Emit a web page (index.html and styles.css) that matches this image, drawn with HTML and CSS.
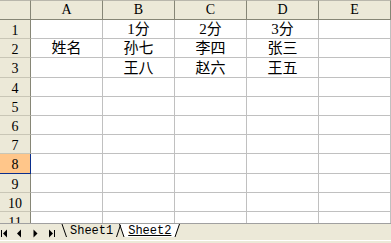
FILE: index.html
```html
<!DOCTYPE html>
<html>
<head>
<meta charset="utf-8">
<link rel="stylesheet" href="styles.css">
</head>
<body>
<div class="app">
  <div class="sheet">
    <div class="grid">
      <div class="corner"></div>
      <div class="ch">A</div><div class="ch">B</div><div class="ch">C</div><div class="ch">D</div><div class="ch">E</div>

      <div class="rh">1</div><div class="c"></div><div class="c">1分</div><div class="c">2分</div><div class="c">3分</div><div class="c"></div>
      <div class="rh">2</div><div class="c">姓名</div><div class="c">孙七</div><div class="c">李四</div><div class="c">张三</div><div class="c"></div>
      <div class="rh">3</div><div class="c"></div><div class="c">王八</div><div class="c">赵六</div><div class="c">王五</div><div class="c"></div>
      <div class="rh">4</div><div class="c"></div><div class="c"></div><div class="c"></div><div class="c"></div><div class="c"></div>
      <div class="rh">5</div><div class="c"></div><div class="c"></div><div class="c"></div><div class="c"></div><div class="c"></div>
      <div class="rh">6</div><div class="c"></div><div class="c"></div><div class="c"></div><div class="c"></div><div class="c"></div>
      <div class="rh">7</div><div class="c"></div><div class="c"></div><div class="c"></div><div class="c"></div><div class="c"></div>
      <div class="rh sel">8</div><div class="c"></div><div class="c"></div><div class="c"></div><div class="c"></div><div class="c"></div>
      <div class="rh">9</div><div class="c"></div><div class="c"></div><div class="c"></div><div class="c"></div><div class="c"></div>
      <div class="rh">10</div><div class="c"></div><div class="c"></div><div class="c"></div><div class="c"></div><div class="c"></div>
      <div class="rh">11</div><div class="c"></div><div class="c"></div><div class="c"></div><div class="c"></div><div class="c"></div>
    </div>
  </div>
  <div class="tabbar">
    <div class="tabrow">
      <div class="nav">
        <svg class="btn" width="15" height="16" viewBox="0 0 15 16"><rect x="1" y="6" width="1" height="7" fill="#000"/><polygon points="3,9.5 7,5.5 7,13.5" fill="#000"/></svg>
        <svg class="btn" width="15" height="16" viewBox="0 0 15 16"><polygon points="2,9.5 6,5.5 6,13.5" fill="#000"/></svg>
        <svg class="btn" width="15" height="16" viewBox="0 0 15 16"><polygon points="7.5,9.5 3.5,5.5 3.5,13.5" fill="#000"/></svg>
        <svg class="btn" width="15" height="16" viewBox="0 0 15 16"><polygon points="8,9.5 4,5.5 4,13.5" fill="#000"/><rect x="9" y="6" width="1" height="7" fill="#000"/></svg>
      </div>
      <div class="tabs">
        <svg class="slant" width="8" height="16" viewBox="0 0 8 16"><line x1="2" y1="0" x2="6.5" y2="13" stroke="#000" stroke-width="1"/></svg>
        <span class="tab">Sheet1</span>
        <svg class="slant" width="11" height="16" viewBox="0 0 11 16"><polygon points="4.5,0 11,0 11,13 9,13" fill="#fff"/><line x1="1.5" y1="13" x2="5.5" y2="1" stroke="#000" stroke-width="1"/><line x1="4.5" y1="0" x2="9" y2="13" stroke="#000" stroke-width="1"/></svg>
        <span class="tab active">Sheet2</span>
        <svg class="slant" width="9" height="16" viewBox="0 0 9 16"><polygon points="0,0 6.5,0 2,13 0,13" fill="#fff"/><line x1="2" y1="13" x2="6.5" y2="0" stroke="#000" stroke-width="1"/></svg>
      </div>
    </div>
    <div class="strip"></div>
  </div>
</div>
</body>
</html>
```

FILE: styles.css
```css
* { box-sizing: border-box; margin: 0; padding: 0; }
html, body { background: #fff; }
body {
  width: 391px;
  height: 243px;
  overflow: hidden;
  font-family: "Liberation Serif", "Noto Sans CJK SC", serif;
  color: #000;
}
.sheet { height: 223px; overflow: hidden; }
.grid {
  display: grid;
  grid-template-columns: 31px repeat(5, 72px);
  grid-template-rows: 20px repeat(11, 19.2px);
}
.corner, .ch {
  background: #ECE9D8;
  border-top: 1px solid #B9B7AC;
  border-right: 1px solid #868676;
  border-bottom: 1px solid #868676;
}
.ch {
  font-size: 14px;
  line-height: 18px;
  text-align: center;
}
.rh {
  background: #ECE9D8;
  border-right: 1px solid #868676;
  border-bottom: 1px solid #C9C6B6;
  font-size: 14px;
  line-height: 19px;
  text-align: center;
  padding-top: 1px;
}
.rh.sel {
  background: #FFC68A;
  border-right: 1px solid #0A2E8C;
  border-bottom: 1px solid #0A2E8C;
}
.c {
  border-right: 1px solid #C0C0C0;
  border-bottom: 1px solid #C0C0C0;
  display: flex;
  align-items: flex-end;
  justify-content: center;
  font-size: 15px;
  line-height: 16px;
  padding-bottom: 1px;
}
.tabbar {
  height: 20px;
  background: #ECE9D8;
  border-top: 1px solid #A0A0A0;
}
.tabrow { height: 16px; display: flex; align-items: flex-start; }
.strip { height: 3px; border-top: 1px solid #fff; }
.nav { display: flex; width: 60px; }
.btn { display: block; }
.tabs { display: flex; align-items: flex-start; }
.slant { display: block; }
.tab {
  font-family: "Liberation Mono", monospace;
  font-size: 12px;
  line-height: 13px;
  height: 13px;
  padding: 1px 2px 0;
}
.tab.active {
  background: #fff;
  text-decoration: underline;
}
```
